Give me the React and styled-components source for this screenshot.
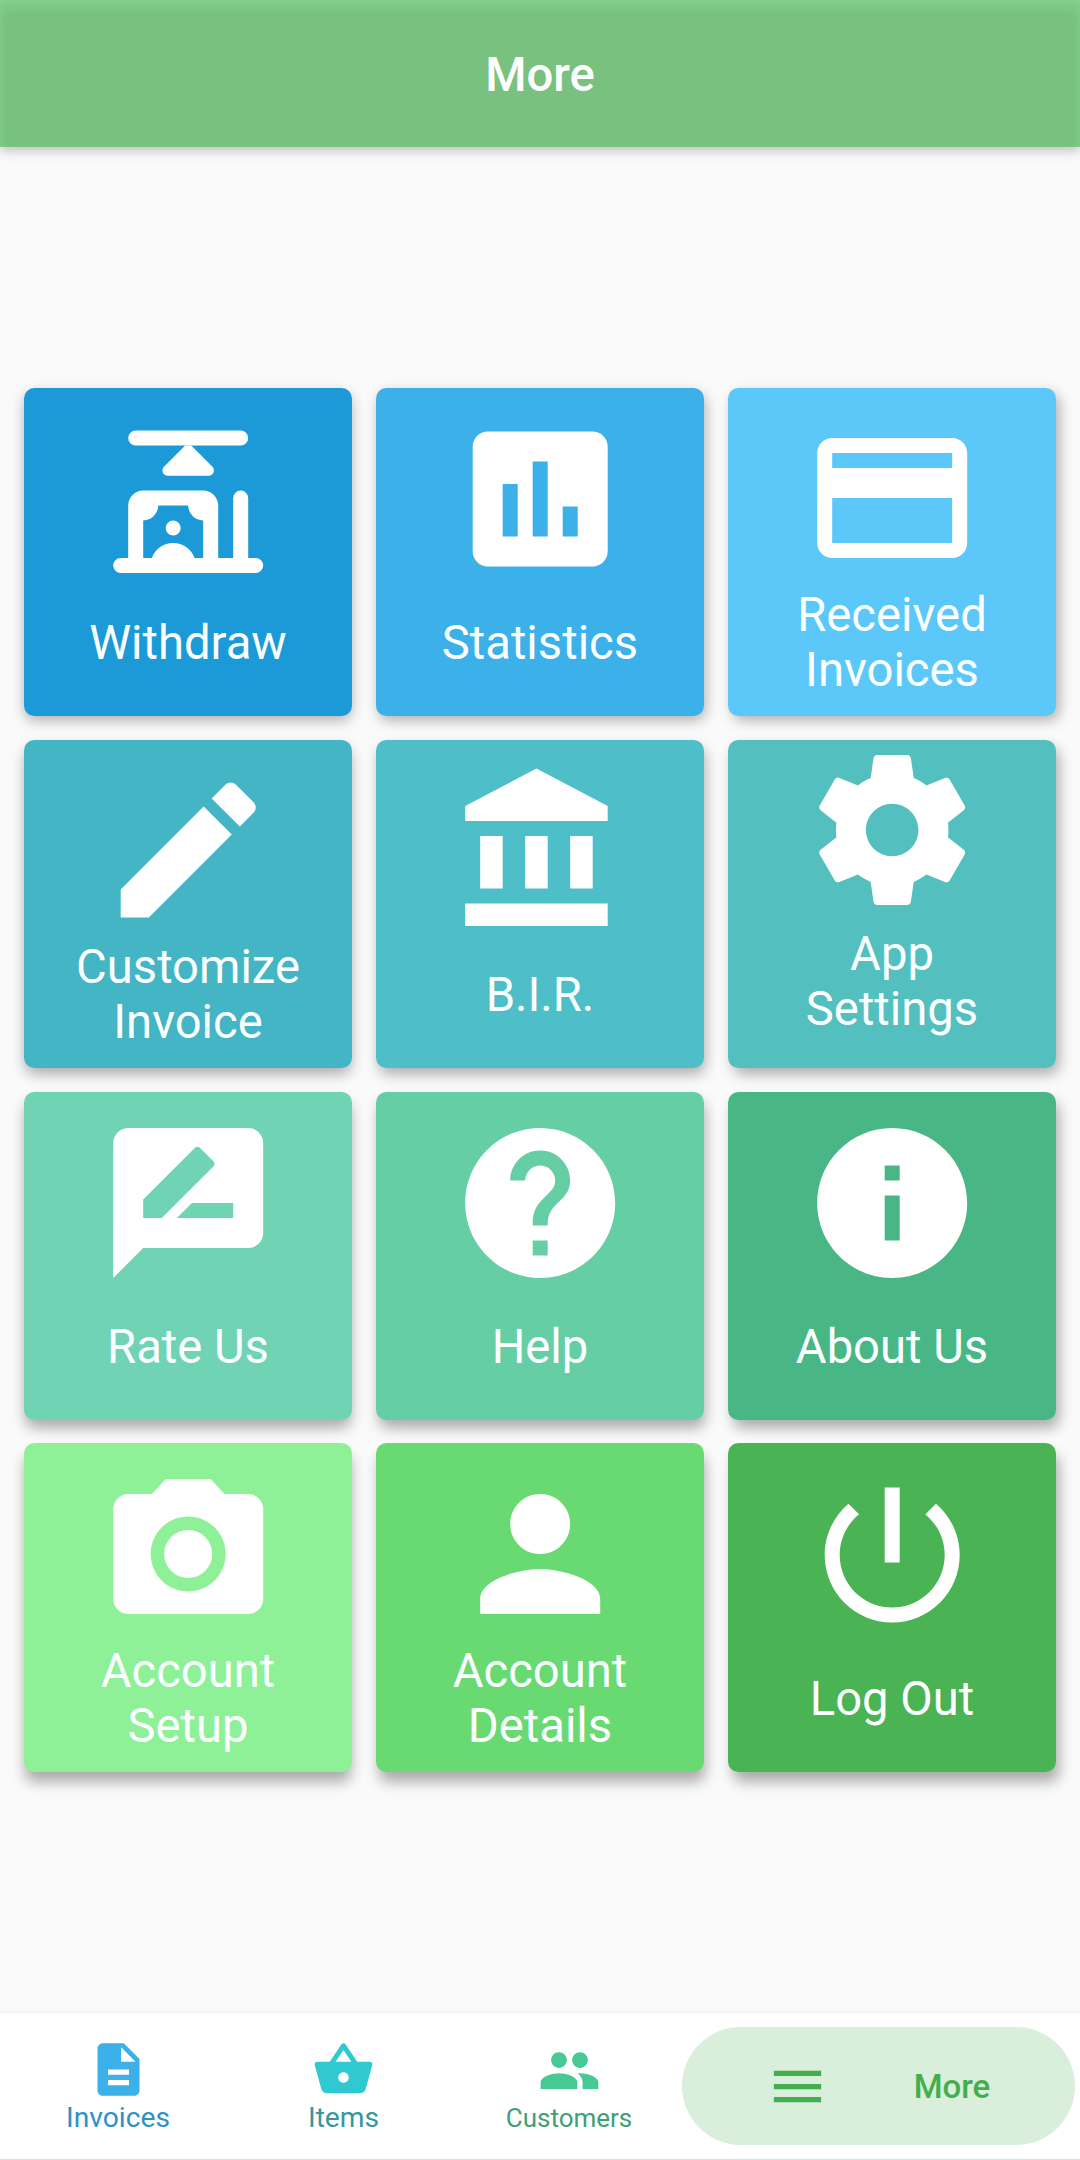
import React from 'react';
import styled, { createGlobalStyle } from 'styled-components';

const GlobalStyle = createGlobalStyle`
  *, *::before, *::after { box-sizing: border-box; }
  html, body { margin: 0; padding: 0; }
  body { background: #fafafa; font-family: Roboto, "Liberation Sans", sans-serif; }
`;

const Screen = styled.div`
  display: flex;
  flex-direction: column;
  width: 1080px;
  height: 2160px;
  overflow: hidden;
  background: #fafafa;
`;

const Header = styled.header`
  display: flex;
  align-items: center;
  justify-content: center;
  flex: none;
  height: 147px;
  background: #78c17f;
  box-shadow:
    0 3px 11px rgba(0, 0, 0, 0.26),
    inset 0 7px 12px rgba(139, 220, 148, 0.6),
    inset 0 0 6px rgba(136, 206, 143, 0.35);
`;

const Title = styled.h1`
  margin: 3px 0 0;
  color: #fff;
  font-size: 47.2px;
  line-height: 55px;
  font-weight: 500;
`;

const Main = styled.main`
  display: flex;
  flex: 1;
  flex-direction: column;
  justify-content: center;
  padding: 0 24px 0.3px;
`;

const TileGrid = styled.div`
  display: grid;
  grid-template-columns: repeat(3, 328px);
  grid-auto-rows: 328.7px;
  gap: 23.3px 24px;
`;

const Tile = styled.button`
  display: flex;
  flex-direction: column;
  align-items: center;
  gap: ${(p) => p.$gap}px;
  padding: ${(p) => p.$top}px 0 0;
  border: 0;
  border-radius: 10.5px;
  background: ${(p) => p.$color};
  color: #fbffff;
  font-family: inherit;
  box-shadow: ${(p) => p.$dx}px ${(p) => p.$dy}px 14px -1px rgba(0, 0, 0, 0.32);
`;

const TileIcon = styled.svg`
  flex: none;
  width: 180.4px;
  height: 180px;
  fill: #fff;
`;

const TileLabel = styled.span`
  font-size: 47.2px;
  line-height: 55px;
  text-align: center;
  white-space: pre-line;
`;

const NavBar = styled.nav`
  display: flex;
  flex: none;
  align-items: center;
  height: 147px;
  padding: 0 5.3px;
  background: #fff;
  border-bottom: 1px solid #dedede;
  box-shadow: 0 0 4px rgba(0, 0, 0, 0.08);
`;

const NavItem = styled.a`
  display: flex;
  flex-direction: column;
  align-items: center;
  width: 225.5px;
  height: 96px;
  padding-top: ${(p) => p.$top}px;
  color: ${(p) => p.$text};
`;

const NavIcon = styled.svg`
  flex: none;
  width: 63px;
  height: 63px;
  fill: ${(p) => p.$color};
`;

const NavLabel = styled.span`
  font-size: ${(p) => p.$size}px;
  line-height: 33px;
`;

const ActiveNavItem = styled.a`
  display: flex;
  align-items: center;
  justify-content: space-evenly;
  width: 393px;
  height: 118px;
  border-radius: 59px;
  background: #d9eedb;
  color: #43ae4d;
  font-size: 33px;
  font-weight: 500;
`;

const ICONS = {
  withdraw: (
    <>
      <rect x="4" y="3" width="16" height="2" rx="1" />
      <path d="M11.6 5h.8l2.83 2.83c.42.42.13 1.2-.5 1.2H9.27c-.63 0-.92-.78-.5-1.2z" />
      <path d="M3 20h1v-7c0-1.1.9-2 2-2h8c1.1 0 2 .9 2 2v7h2v-8a1 1 0 0 1 2 0v8h1a1 1 0 0 1 0 2H3a1 1 0 0 1 0-2zm3 0h1.17a3 3 0 0 1 5.66 0H14v-5a2 2 0 0 1-2-2H8a2 2 0 0 1-2 2z" fillRule="evenodd" />
      <circle cx="10" cy="16" r="1" />
    </>
  ),
  statistics: <path d="M19 3H5c-1.1 0-2 .9-2 2v14c0 1.1.9 2 2 2h14c1.1 0 2-.9 2-2V5c0-1.1-.9-2-2-2zM9 17H7v-7h2v7zm4 0h-2V7h2v10zm4 0h-2v-4h2v4z" />,
  card: <path d="M20 4H4c-1.11 0-1.99.89-1.99 2L2 18c0 1.11.89 2 2 2h16c1.11 0 2-.89 2-2V6c0-1.11-.89-2-2-2zm0 14H4v-6h16v6zm0-10H4V6h16v2z" />,
  edit: <path d="M3 17.25V21h3.75L17.81 9.94l-3.75-3.75L3 17.25zM20.71 7.04c.39-.39.39-1.02 0-1.41l-2.34-2.34c-.39-.39-1.02-.39-1.41 0l-1.83 1.83 3.75 3.75 1.83-1.83z" />,
  bank: <path d="M4 10v7h3v-7H4zm6 0v7h3v-7h-3zM2 22h19v-3H2v3zm14-12v7h3v-7h-3zm-4.5-9L2 6v2h19V6l-9.5-5z" />,
  settings: <path d="M19.43 12.98c.04-.32.07-.64.07-.98s-.03-.66-.07-.98l2.11-1.65c.19-.15.24-.42.12-.64l-2-3.46c-.12-.22-.39-.3-.61-.22l-2.49 1c-.52-.4-1.08-.73-1.69-.98l-.38-2.65C14.46 2.18 14.25 2 14 2h-4c-.25 0-.46.18-.49.42l-.38 2.65c-.61.25-1.17.59-1.69.98l-2.49-1c-.23-.09-.49 0-.61.22l-2 3.46c-.13.22-.07.49.12.64l2.11 1.65c-.04.32-.07.65-.07.98s.03.66.07.98l-2.11 1.65c-.19.15-.24.42-.12.64l2 3.46c.12.22.39.3.61.22l2.49-1c.52.4 1.08.73 1.69.98l.38 2.65c.03.24.24.42.49.42h4c.25 0 .46-.18.49-.42l.38-2.65c.61-.25 1.17-.59 1.69-.98l2.49 1c.23.09.49 0 .61-.22l2-3.46c.12-.22.07-.49-.12-.64l-2.11-1.65zM12 15.5c-1.93 0-3.5-1.57-3.5-3.5s1.57-3.5 3.5-3.5 3.5 1.57 3.5 3.5-1.57 3.5-3.5 3.5z" />,
  rate: <path d="M20 2H4c-1.1 0-1.99.9-1.99 2L2 22l4-4h14c1.1 0 2-.9 2-2V4c0-1.1-.9-2-2-2zM6 14v-2.47l6.88-6.88c.2-.2.51-.2.71 0l1.77 1.77c.2.2.2.51 0 .71L8.47 14H6zm12 0h-7.5l2-2H18v2z" />,
  help: <path d="M12 2C6.48 2 2 6.48 2 12s4.48 10 10 10 10-4.48 10-10S17.52 2 12 2zm1 17h-2v-2h2v2zm2.07-7.75l-.9.92C13.45 12.9 13 13.5 13 15h-2v-.5c0-1.1.45-2.1 1.17-2.83l1.24-1.26c.37-.36.59-.86.59-1.41 0-1.1-.9-2-2-2s-2 .9-2 2H8c0-2.21 1.79-4 4-4s4 1.79 4 4c0 .88-.36 1.68-.93 2.25z" />,
  info: <path d="M12 2C6.48 2 2 6.48 2 12s4.48 10 10 10 10-4.48 10-10S17.52 2 12 2zm1 15h-2v-6h2v6zm0-8h-2V7h2v2z" />,
  camera: (
    <>
      <circle cx="12" cy="12" r="3.2" />
      <path d="M9 2L7.17 4H4c-1.1 0-2 .9-2 2v12c0 1.1.9 2 2 2h16c1.1 0 2-.9 2-2V6c0-1.1-.9-2-2-2h-3.17L15 2H9zm3 15c-2.76 0-5-2.24-5-5s2.24-5 5-5 5 2.24 5 5-2.24 5-5 5z" />
    </>
  ),
  person: <path d="M12 12c2.21 0 4-1.79 4-4s-1.79-4-4-4-4 1.79-4 4 1.79 4 4 4zm0 2c-2.67 0-8 1.34-8 4v2h16v-2c0-2.66-5.33-4-8-4z" />,
  power: <path d="M13 3h-2v10h2V3zm4.83 2.17l-1.42 1.42C17.99 7.86 19 9.81 19 12c0 3.87-3.13 7-7 7s-7-3.13-7-7c0-2.19 1.01-4.14 2.58-5.42L6.17 5.17C4.23 6.82 3 9.26 3 12c0 4.97 4.03 9 9 9s9-4.03 9-9c0-2.74-1.23-5.18-3.17-6.83z" />,
  document: <path d="M14 2H6c-1.1 0-1.99.9-1.99 2L4 20c0 1.1.89 2 1.99 2H18c1.1 0 2-.9 2-2V8l-6-6zm2 16H8v-2h8v2zm0-4H8v-2h8v2zm-3-5V3.5L18.5 9H13z" />,
  basket: <path d="M17.21 9l-4.38-6.56c-.19-.28-.51-.42-.83-.42-.32 0-.64.14-.83.43L6.79 9H2c-.55 0-1 .45-1 1 0 .09.01.18.04.27l2.54 9.27c.23.84 1 1.46 1.92 1.46h13c.92 0 1.69-.62 1.93-1.46l2.54-9.27L23 10c0-.55-.45-1-1-1h-4.79zM9 9l3-4.4L15 9H9zm3 8c-1.1 0-2-.9-2-2s.9-2 2-2 2 .9 2 2-.9 2-2 2z" />,
  people: <path d="M16 11c1.66 0 2.99-1.34 2.99-3S17.66 5 16 5s-3 1.34-3 3 1.34 3 3 3zm-8 0c1.66 0 2.99-1.34 2.99-3S9.66 5 8 5 5 6.34 5 8s1.34 3 3 3zm0 2c-2.33 0-7 1.17-7 3.5V19h14v-2.5c0-2.33-4.67-3.5-7-3.5zm8 0c-.29 0-.62.02-.97.05 1.16.84 1.97 1.97 1.97 3.45V19h6v-2.5c0-2.33-4.67-3.5-7-3.5z" />,
  menu: <path d="M3 18h18v-2H3v2zm0-5h18v-2H3v2zm0-7v2h18V6H3z" />,
};

const ONE_LINE = { top: 21.6, gap: 26.6 };
const TWO_LINES = { top: 20.4, gap: 0 };

const TILES = [
  { icon: 'withdraw', label: 'Withdraw', color: '#1c9ad8', top: 20.6, gap: 27.6 },
  { icon: 'statistics', label: 'Statistics', color: '#3cb0e9', ...ONE_LINE },
  { icon: 'card', label: 'Received\nInvoices', color: '#5cc8fa', ...TWO_LINES },
  { icon: 'edit', label: 'Customize\nInvoice', color: '#44b5c4', ...TWO_LINES },
  { icon: 'bank', label: 'B.I.R.', color: '#4ebec8', ...ONE_LINE },
  { icon: 'settings', label: 'App\nSettings', color: '#53c0bf', top: 0.6, gap: 6.4 },
  { icon: 'rate', label: 'Rate Us', color: '#6fd3b4', ...ONE_LINE },
  { icon: 'help', label: 'Help', color: '#66cea5', ...ONE_LINE },
  { icon: 'info', label: 'About Us', color: '#48b785', ...ONE_LINE },
  { icon: 'camera', label: 'Account\nSetup', color: '#8ff197', ...TWO_LINES },
  { icon: 'person', label: 'Account\nDetails', color: '#69da72', ...TWO_LINES },
  { icon: 'power', label: 'Log Out', color: '#4ab454', ...ONE_LINE },
];

const SHADOW_X = [0, 2, 4];
const SHADOW_Y = [5, 7, 9, 11];

const NAV = [
  { icon: 'document', label: 'Invoices', color: '#3cb0e9', text: '#2f92c6', size: 28.2, top: 0 },
  { icon: 'basket', label: 'Items', color: '#30c9d1', text: '#35989f', size: 28.2, top: 0 },
  { icon: 'people', label: 'Customers', color: '#46c994', text: '#3f9f77', size: 26, top: 0.8 },
];

export default function App() {
  return (
    <Screen>
      <GlobalStyle />
      <Header>
        <Title>More</Title>
      </Header>
      <Main>
        <TileGrid>
          {TILES.map((t, i) => (
            <Tile
              key={t.label}
              $color={t.color}
              $top={t.top}
              $gap={t.gap}
              $dx={SHADOW_X[i % 3]}
              $dy={SHADOW_Y[Math.floor(i / 3)]}
            >
              <TileIcon viewBox="0 0 24 24">{ICONS[t.icon]}</TileIcon>
              <TileLabel>{t.label}</TileLabel>
            </Tile>
          ))}
        </TileGrid>
      </Main>
      <NavBar>
        {NAV.map((n) => (
          <NavItem key={n.label} $text={n.text} $top={n.top}>
            <NavIcon viewBox="0 0 24 24" $color={n.color}>{ICONS[n.icon]}</NavIcon>
            <NavLabel $size={n.size}>{n.label}</NavLabel>
          </NavItem>
        ))}
        <ActiveNavItem>
          <NavIcon viewBox="0 0 24 24" $color="#43ae4d">{ICONS.menu}</NavIcon>
          <span>More</span>
        </ActiveNavItem>
      </NavBar>
    </Screen>
  );
}
